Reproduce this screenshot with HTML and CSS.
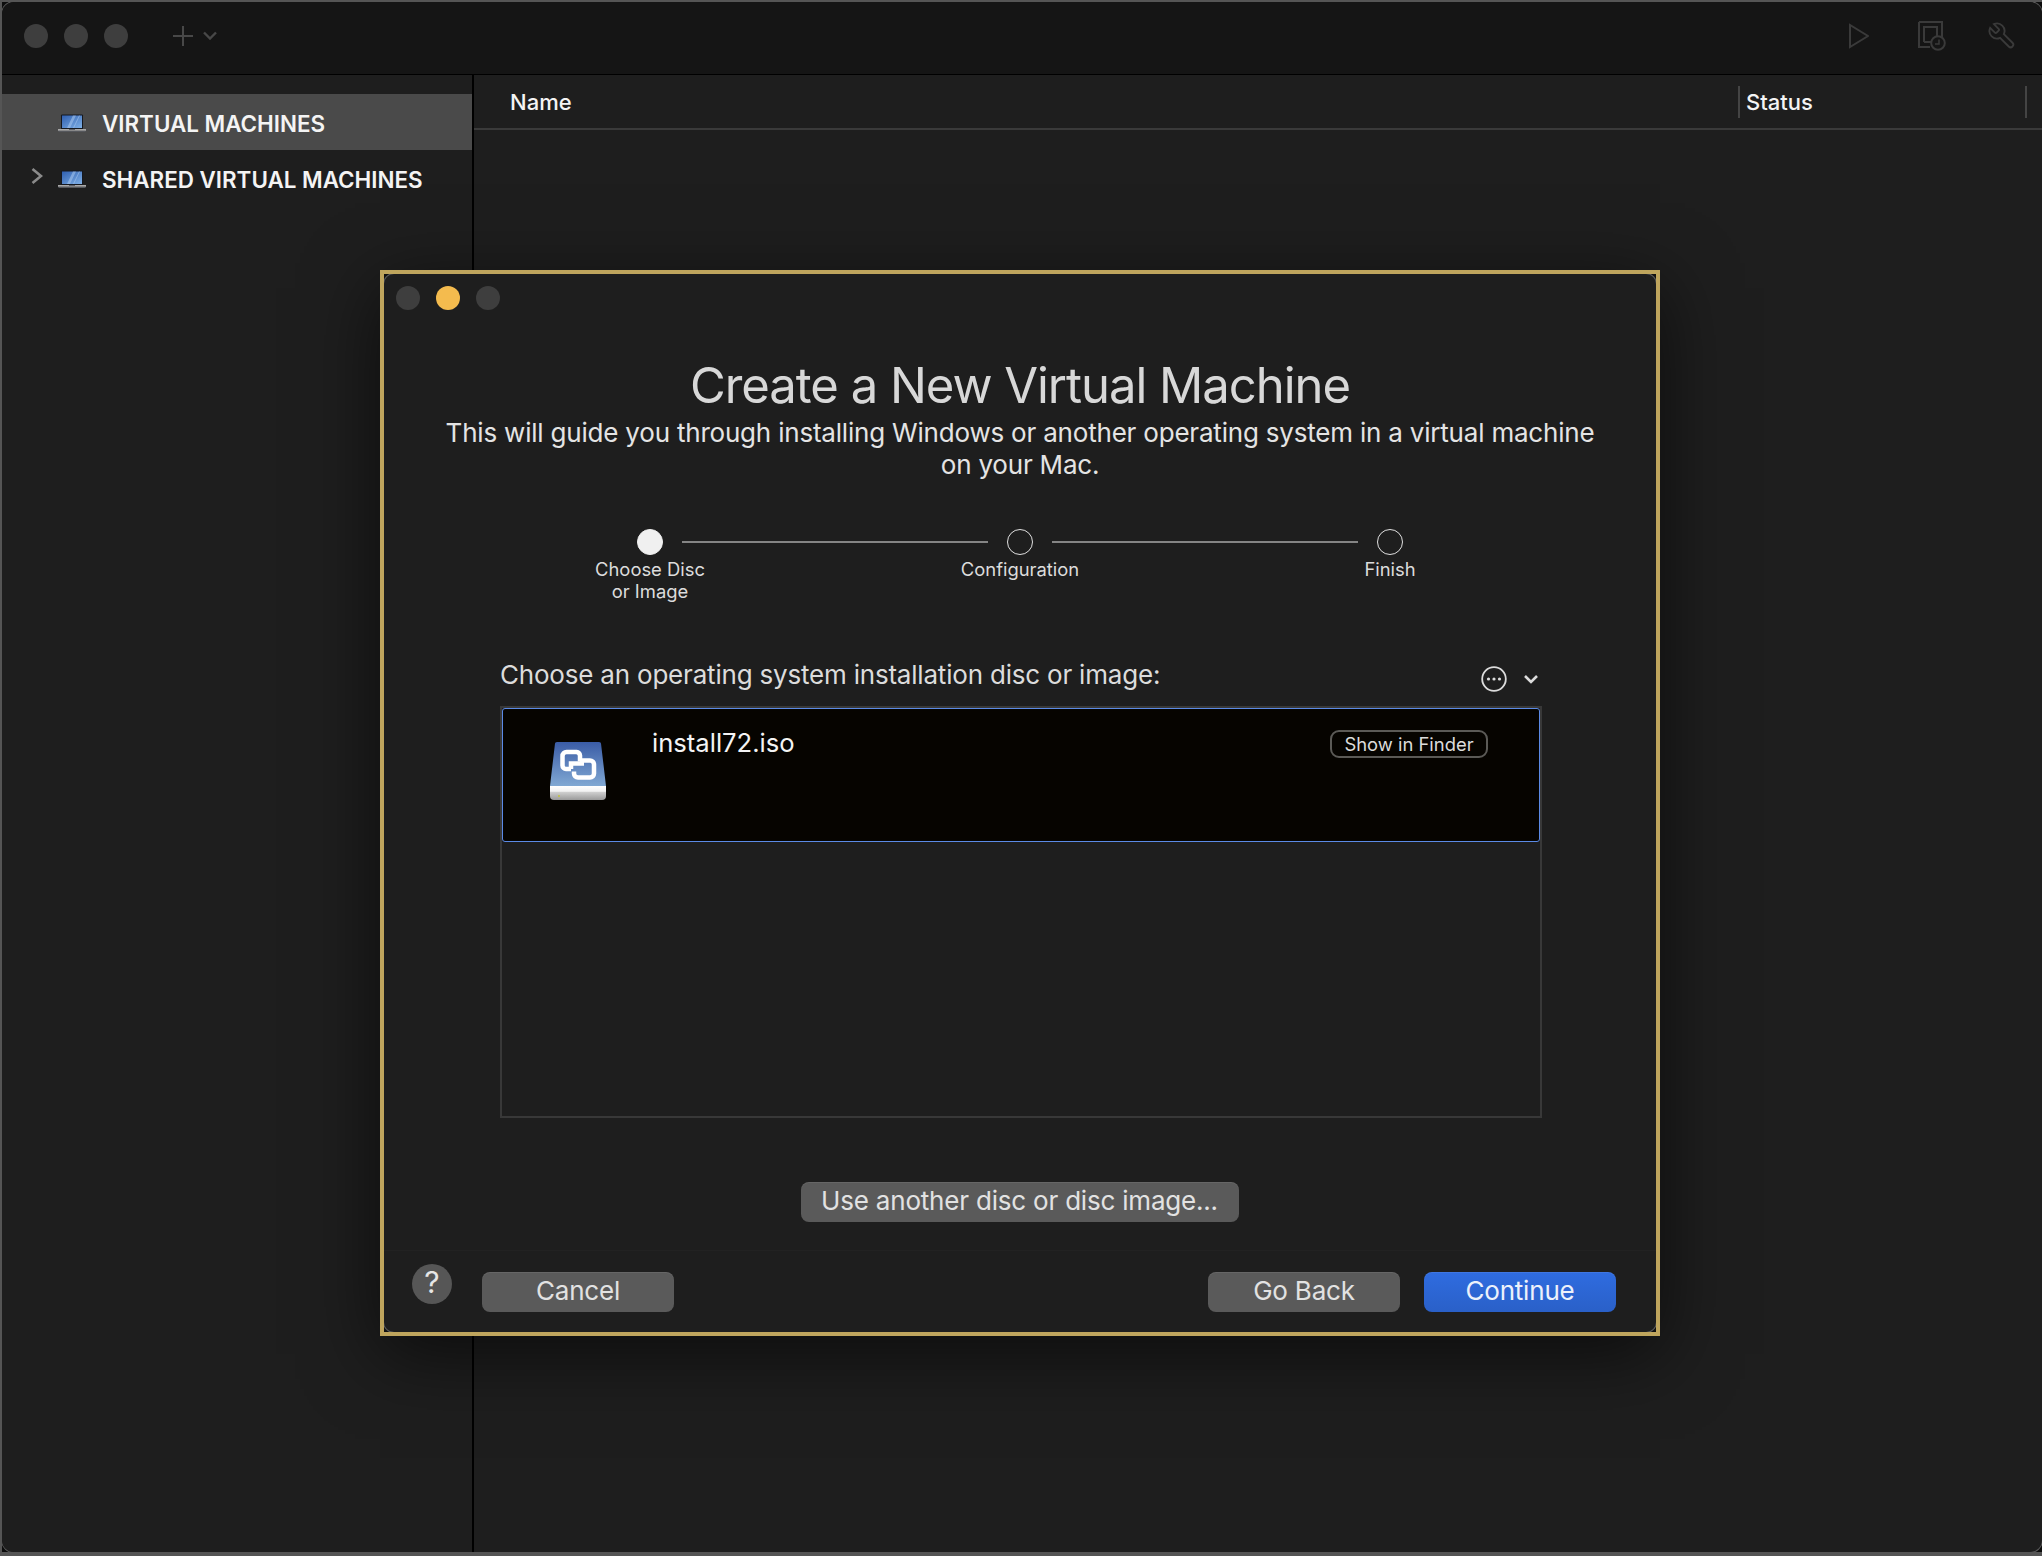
FILE: index.html
```html
<!DOCTYPE html>
<html lang="en">
<head>
    <meta charset="UTF-8">
    <title>Create a New Virtual Machine</title>
    <link rel="stylesheet" href="styles.css">
</head>
<body>
    <svg class="defs" width="0" height="0">
        <defs>
            <linearGradient id="lapScreen" x1="0" y1="0" x2="1" y2="1">
                <stop offset="0" stop-color="#2f5fb0"/>
                <stop offset="1" stop-color="#7fb0e6"/>
            </linearGradient>
            <linearGradient id="discBody" x1="0" y1="0" x2="0" y2="1">
                <stop offset="0" stop-color="#3a5ca6"/>
                <stop offset="1" stop-color="#80a8d3"/>
            </linearGradient>
            <linearGradient id="discBase" x1="0" y1="0" x2="0" y2="1">
                <stop offset="0" stop-color="#ffffff"/>
                <stop offset="0.38" stop-color="#f2f2f2"/>
                <stop offset="0.44" stop-color="#cfcfcf"/>
                <stop offset="1" stop-color="#9a9a9a"/>
            </linearGradient>
            <symbol id="laptop" viewBox="0 0 28 18">
                <rect x="3" y="0.5" width="22" height="15" rx="1" fill="#15181f"/>
                <rect x="4" y="1.500" width="20" height="12.500" fill="url(#lapScreen)"/>
                <path d="M9 14l6-12.500h3L12 14zM15 14l6-12.500h1L16 14z" fill="#a9c8ee" opacity="0.55"/>
                <rect x="0" y="15" width="28" height="1.800" fill="#a8a8a8"/>
                <rect x="0.5" y="16.800" width="27" height="1.200" fill="#55575c"/>
                <rect x="11" y="15" width="6" height="1" fill="#5f6066"/>
            </symbol>
        </defs>
    </svg>

    <div class="window">
        <div class="inner">
            <header class="titlebar">
                <span class="light"></span>
                <span class="light"></span>
                <span class="light"></span>
                <svg class="tool-plus" width="22" height="22" viewBox="0 0 22 22"><path d="M11 1v20M1 11h20" stroke="#484848" stroke-width="2" fill="none"/></svg>
                <svg class="tool-chev" width="14" height="9" viewBox="0 0 14 9"><path d="M1 1.500L7 7.500l6-6" stroke="#484848" stroke-width="2.400" fill="none"/></svg>
                <svg class="tool-play" width="20" height="26" viewBox="0 0 20 26"><path d="M1 2v22l18-11z" stroke="#3a3a3a" stroke-width="2" fill="none"/></svg>
                <svg class="tool-snap" width="28" height="30" viewBox="0 0 28 30">
                    <path d="M1 1h23v15M12 26H1V1M6 21V6h13v10M6 21h7" stroke="#3a3a3a" stroke-width="2" fill="none"/>
                    <circle cx="20" cy="22" r="6.800" stroke="#3a3a3a" stroke-width="2" fill="#151515"/>
                    <path d="M21 18.500V23h-4" stroke="#3a3a3a" stroke-width="1.500" fill="none"/>
                </svg>
                <svg class="tool-wrench" width="30" height="30" viewBox="0 0 24 24"><path transform="translate(24 0) scale(-1 1)" d="M14.7 6.3a1 1 0 0 0 0 1.400l1.600 1.600a1 1 0 0 0 1.400 0l3.770-3.770a6 6 0 0 1-7.940 7.940l-6.910 6.910a2.120 2.120 0 0 1-3-3l6.910-6.910a6 6 0 0 1 7.940-7.940l-3.760 3.760z" stroke="#3a3a3a" stroke-width="1.500" fill="none"/></svg>
            </header>

            <div class="body">
                <aside class="sidebar">
                    <div class="side-row selected">
                        <span class="disclosure"></span>
                        <svg class="laptop" width="28" height="18"><use href="#laptop"/></svg>
                        <span>VIRTUAL MACHINES</span>
                    </div>
                    <div class="side-row">
                        <svg class="disclosure" width="12" height="16" viewBox="0 0 12 16"><path d="M1.500 1L10 8l-8.500 7" stroke="#8a8a8a" stroke-width="2.600" fill="none"/></svg>
                        <svg class="laptop" width="28" height="18"><use href="#laptop"/></svg>
                        <span>SHARED VIRTUAL MACHINES</span>
                    </div>
                </aside>

                <main class="table">
                    <div class="table-head">
                        <div class="col col-name">Name</div>
                        <div class="col col-status">Status</div>
                        <div class="col col-rest"></div>
                    </div>
                </main>
            </div>
        </div>

        <section class="dialog">
            <div class="dialog-inner">
                <div class="dialog-lights">
                    <span class="light"></span>
                    <span class="light light-min"></span>
                    <span class="light"></span>
                </div>

                <h1 class="dialog-title">Create a New Virtual Machine</h1>
                <p class="dialog-sub">This will guide you through installing Windows or another operating system in a virtual machine<br>on your Mac.</p>

                <div class="stepper">
                    <div class="track">
                        <span class="dot dot-on"></span>
                        <span class="track-line"></span>
                        <span class="dot"></span>
                        <span class="track-line"></span>
                        <span class="dot"></span>
                    </div>
                    <div class="step-labels">
                        <span>Choose Disc<br>or Image</span>
                        <span>Configuration</span>
                        <span>Finish</span>
                    </div>
                </div>

                <div class="prompt">
                    <span>Choose an operating system installation disc or image:</span>
                    <div class="prompt-tools">
                        <svg width="26" height="26" viewBox="0 0 26 26">
                            <circle cx="13" cy="13" r="11.800" stroke="#dcdcdc" stroke-width="1.800" fill="none"/>
                            <circle cx="7.500" cy="13" r="1.600" fill="#dcdcdc"/>
                            <circle cx="13" cy="13" r="1.600" fill="#dcdcdc"/>
                            <circle cx="18.500" cy="13" r="1.600" fill="#dcdcdc"/>
                        </svg>
                        <svg width="14" height="10" viewBox="0 0 14 10"><path d="M1 2l6 6 6-6" stroke="#dcdcdc" stroke-width="2.600" fill="none"/></svg>
                    </div>
                </div>

                <div class="disc-list">
                    <div class="disc-row">
                        <svg class="disc-icon" width="56" height="58" viewBox="0 0 56 58">
                            <path d="M5 1.500Q5 0 7 0h42q2 0 2 1.500L56 44H0z" fill="url(#discBody)"/>
                            <path d="M21 27h-5a3.500 3.500 0 0 1-3.500-3.500v-9.500a4 4 0 0 1 4-4h10a4 4 0 0 1 3.500 3.500v6" stroke="#fff" stroke-width="4.500" fill="none" stroke-linejoin="round"/>
                            <path d="M21 27v-5.500h13" stroke="#fff" stroke-width="4.500" fill="none"/>
                            <path d="M30 18.500h10a4 4 0 0 1 4 4v9a4 4 0 0 1-4 4H28a4 4 0 0 1-4-4v-2" stroke="#fff" stroke-width="4.500" fill="none" stroke-linejoin="round"/>
                            <path d="M0 44h56v10q0 4-4 4H4q-4 0-4-4z" fill="url(#discBase)"/>
                            <circle cx="9" cy="54" r="1" fill="#c5c53a"/>
                        </svg>
                        <span class="disc-name">install72.iso</span>
                        <span class="finder-btn">Show in Finder</span>
                    </div>
                </div>

                <div class="another">
                    <span class="btn btn-another">Use another disc or disc image...</span>
                </div>

                <footer class="dialog-foot">
                    <span class="help">?</span>
                    <span class="btn btn-cancel">Cancel</span>
                    <span class="btn btn-back">Go Back</span>
                    <span class="btn btn-continue">Continue</span>
                </footer>
            </div>
        </section>
    </div>
</body>
</html>
```

FILE: styles.css
```css
* {
    box-sizing: border-box;
}

html, body {
    margin: 0;
    height: 100%;
}

body {
    font-family: Inter, "Noto Sans", sans-serif;
    background-color: #0f0f0f;
    color: #fff;
    overflow: hidden;
}

.defs {
    position: absolute;
}

.window {
    position: relative;
    width: 2042px;
    height: 1556px;
    background: #0c0c0c;
    border-top: 2px solid #555;
    border-left: 2px solid #555;
    border-bottom: 4px solid #555;
    overflow: hidden;
}

.inner {
    display: flex;
    flex-direction: column;
    height: 100%;
    background: #1e1e1e;
    border-radius: 12px;
    box-shadow: 0 0 0 1px #5a5a5a;
    overflow: hidden;
}

/* barra superior */
.titlebar {
    display: flex;
    align-items: center;
    flex: none;
    height: 73px;
    padding: 0 25px 5px 22px;
    background: #151515;
    border-bottom: 1px solid #000;
}

.light {
    width: 24px;
    height: 24px;
    border-radius: 50%;
    background: #3e3e3e;
    margin-right: 16px;
}

.tool-plus {
    margin-left: 28px;
}

.tool-chev {
    margin-left: 9px;
}

.tool-play {
    margin-left: auto;
}

.tool-snap {
    margin-left: 49px;
}

.tool-wrench {
    margin-left: 41px;
}

.body {
    display: flex;
    flex: 1;
}

.sidebar {
    flex: none;
    width: 472px;
    padding-top: 19px;
    background: #1e1e1e;
    border-right: 2px solid #000;
}

.side-row {
    display: flex;
    align-items: center;
    height: 56px;
    padding: 2px 0 0 29px;
    font-size: 22.400px;
    font-weight: 600;
    color: #f4f4f4;
}

.side-row.selected {
    background: #4a4a4a;
}

.disclosure {
    flex: none;
    width: 12px;
    margin-right: 15px;
    margin-top: -6px;
}

.laptop {
    flex: none;
    margin-right: 16px;
}

.table {
    flex: 1;
}

.table-head {
    display: flex;
    align-items: center;
    height: 55px;
    border-bottom: 2px solid #3a3a3a;
    font-size: 22px;
    font-weight: 500;
    color: #f4f4f4;
}

.col {
    display: flex;
    align-items: center;
    height: 32px;
}

.col-name {
    width: 1264px;
    padding-left: 36px;
}

.col-status {
    width: 287px;
    padding-left: 6px;
    border-left: 2px solid #444;
}

.col-rest {
    flex: 1;
    border-left: 2px solid #444;
}

/* dialogo */
.dialog {
    position: absolute;
    left: 378px;
    top: 268px;
    width: 1280px;
    height: 1066px;
    border: 4px solid #bfa55d;
    background: #101010;
    box-shadow: 0 18px 70px rgba(0, 0, 0, 0.6);
    overflow: hidden;
}

.dialog-inner {
    height: 100%;
    background: #1e1e1e;
    border-radius: 10px;
    box-shadow: 0 0 0 1px #5a5a5a;
}

.dialog-lights {
    display: flex;
    padding: 12px 0 0 12px;
}

.light-min {
    background: #f4bb4e;
}

.dialog-title {
    margin: 46px 0 0;
    font-size: 49px;
    font-weight: 400;
    line-height: 60px;
    letter-spacing: -1.030px;
    text-align: center;
    color: #d8d8d8;
}

.dialog-sub {
    margin: 1px 0 0;
    font-size: 26px;
    line-height: 32px;
    letter-spacing: -0.200px;
    text-align: center;
    color: #e4e4e4;
}

.stepper {
    display: flex;
    flex-direction: column;
    align-items: center;
    margin-top: 48px;
}

.track {
    display: flex;
    align-items: center;
    width: 766px;
}

.dot {
    flex: none;
    width: 26px;
    height: 26px;
    border: 1.500px solid #e0e0e0;
    border-radius: 50%;
}

.dot-on {
    background: #f0f0f0;
    border-color: #f0f0f0;
}

.track-line {
    flex: 1;
    height: 2px;
    margin: 0 19px;
    background: #858585;
}

.step-labels {
    display: flex;
    justify-content: space-between;
    width: 880px;
    margin-top: 3px;
}

.step-labels span {
    width: 140px;
    font-size: 18.400px;
    line-height: 22px;
    text-align: center;
    color: #dcdcdc;
}

.prompt {
    display: flex;
    align-items: center;
    justify-content: space-between;
    width: 1042px;
    height: 32px;
    margin: 56px 0 0 116px;
    font-size: 26px;
    letter-spacing: -0.200px;
    color: #dcdcdc;
}

.prompt-tools {
    display: flex;
    align-items: center;
    gap: 17px;
    margin: 10px 4px 0 0;
}

.disc-list {
    width: 1042px;
    height: 412px;
    margin: 16px 0 0 116px;
    border: 2px solid #383838;
}

.disc-row {
    display: flex;
    align-items: flex-start;
    height: 134px;
    padding: 17px 51px 0 47px;
    background: #060400;
    border: 1.500px solid #5b8ae6;
    border-radius: 3px;
}

.disc-icon {
    flex: none;
    margin-top: 16px;
}

.disc-name {
    flex: 1;
    margin: 1px 0 0 46px;
    font-size: 25.600px;
    line-height: 32px;
    color: #f4f4f4;
}

.finder-btn {
    margin-top: 4px;
    width: 158px;
    height: 28px;
    border: 2px solid #5b5a56;
    border-radius: 9px;
    font-size: 18.400px;
    line-height: 24px;
    text-align: center;
    color: #dcdcdc;
}

.another {
    display: flex;
    justify-content: center;
    margin-top: 64px;
    padding-right: 1px;
}

.btn {
    display: flex;
    align-items: center;
    justify-content: center;
    height: 40px;
    padding-bottom: 4px;
    border-radius: 8px;
    background: #5a5a5a;
    box-shadow: inset 0 1px 0 rgba(255, 255, 255, 0.08);
    font-size: 26px;
    letter-spacing: -0.200px;
    color: #e2e2e2;
}

.btn-another {
    width: 438px;
}

.dialog-foot {
    display: flex;
    align-items: flex-start;
    margin-top: 28px;
    padding: 21px 40px 0 28px;
    border-top: 1px solid #222;
}

.help {
    width: 40px;
    height: 40px;
    margin-top: -8px;
    border-radius: 50%;
    background: #565656;
    font-size: 30px;
    line-height: 36px;
    text-align: center;
    color: #e6e6e6;
}

.btn-cancel, .btn-back, .btn-continue {
    width: 192px;
}

.btn-cancel {
    margin-left: 30px;
}

.btn-back {
    margin-left: auto;
}

.btn-continue {
    margin-left: 24px;
    background: linear-gradient(#2f6ce0, #2a60c8);
    color: #ecf1fb;
}
```
